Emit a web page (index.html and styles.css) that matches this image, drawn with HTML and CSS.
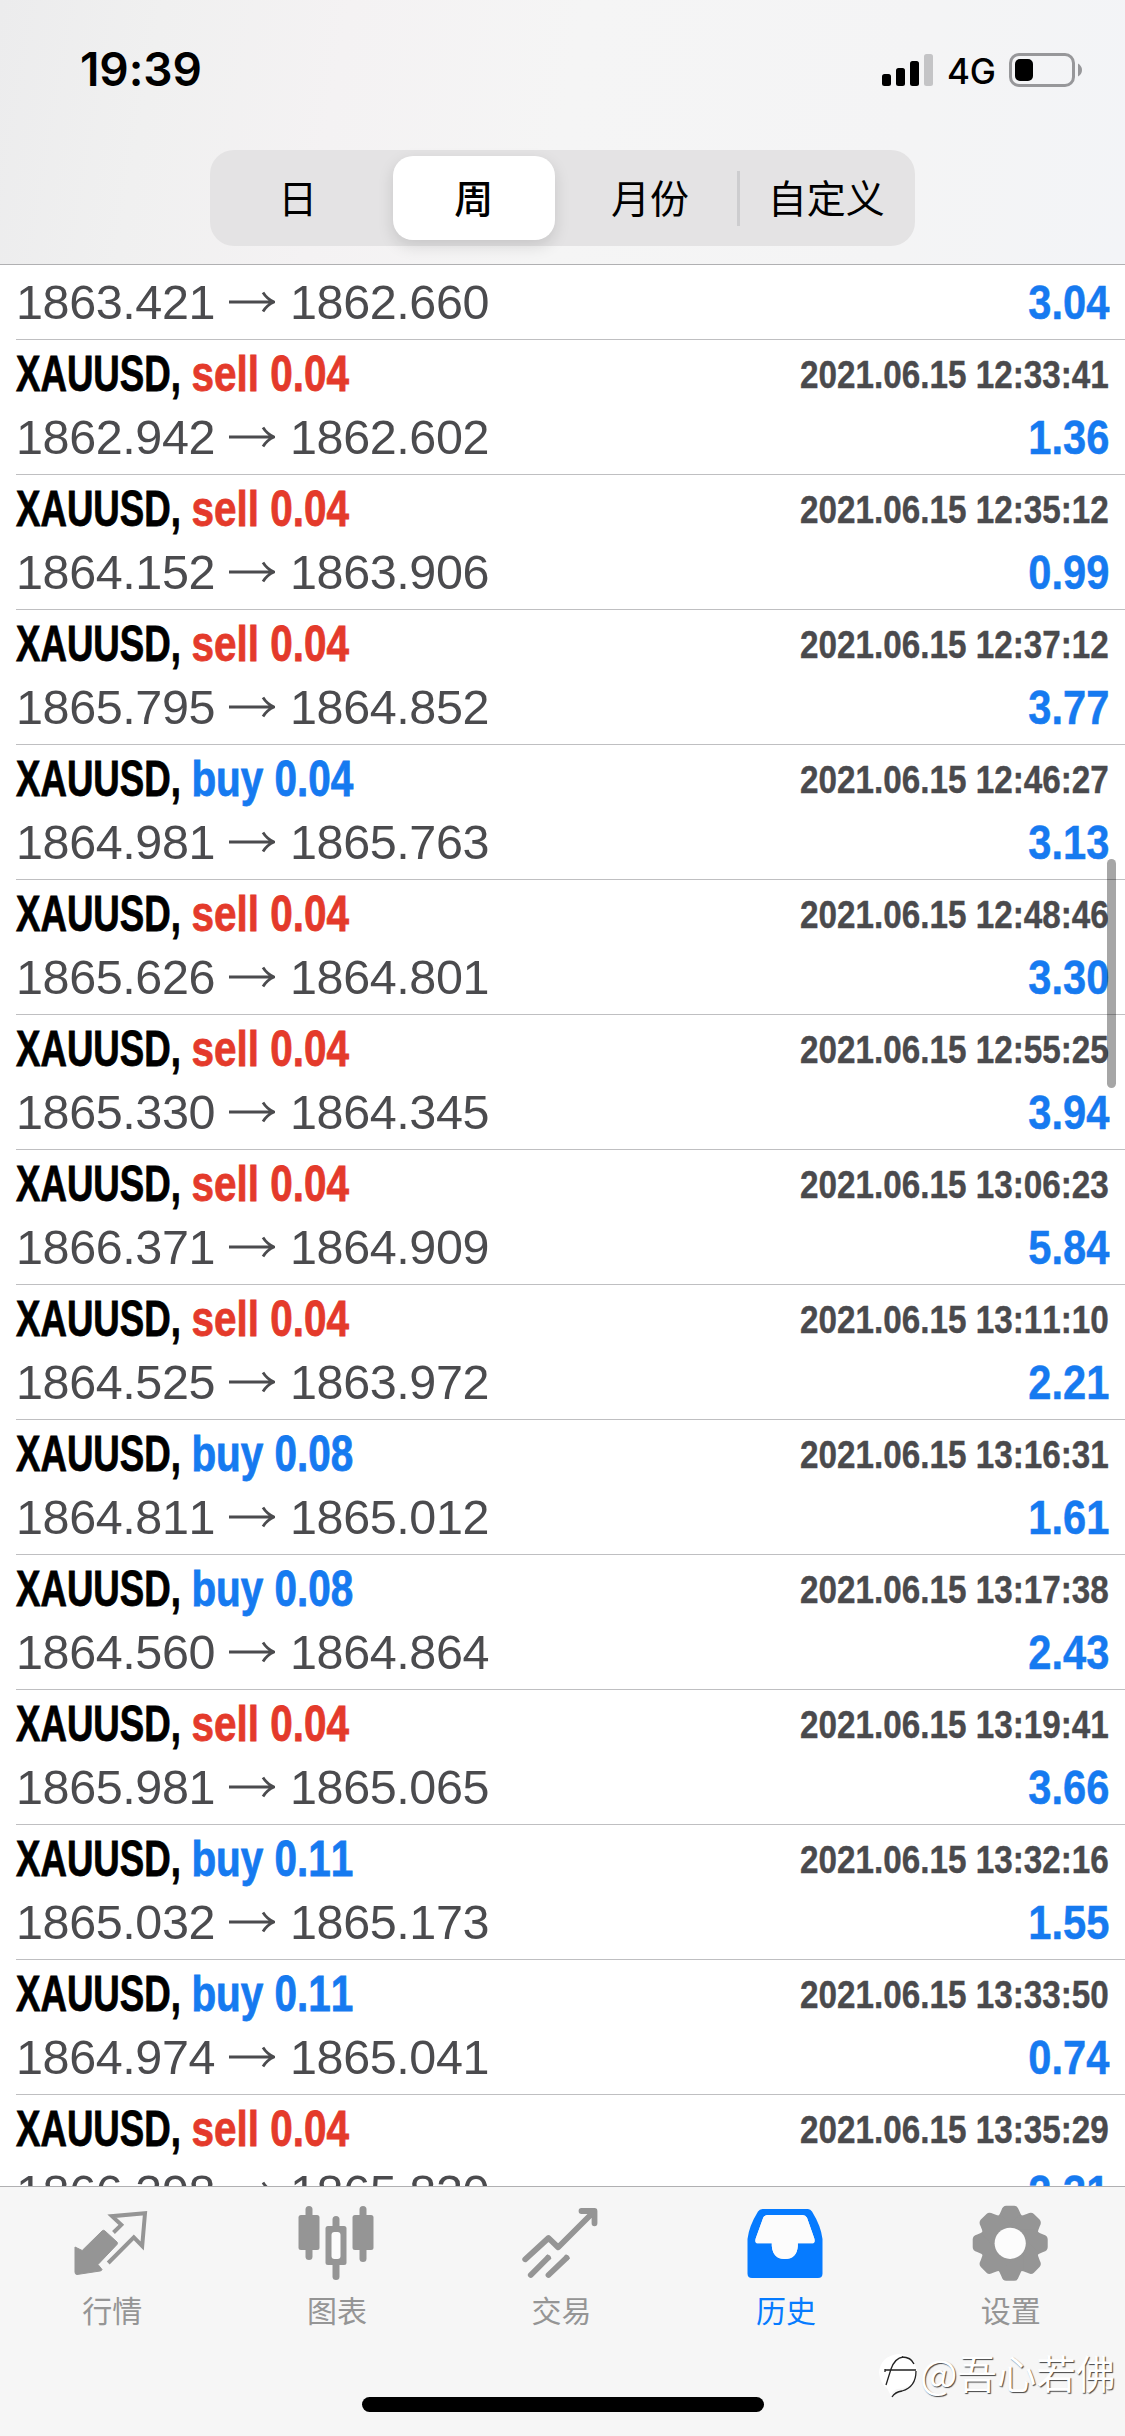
FILE: index.html
```html
<!DOCTYPE html>
<html lang="zh-CN">
<head>
<meta charset="utf-8">
<title>历史</title>
<link rel="stylesheet" href="styles.css">
</head>
<body>
<svg class="defs" width="0" height="0" aria-hidden="true">
  <symbol id="arrow" viewBox="0 0 46 22"><path d="M0 11H43M34 1.5Q38 8 45 11Q38 14 34 20.5" fill="none" stroke="#4b4b4e" stroke-width="2.8"/></symbol>
</svg>
<div class="screen">
  <header class="header">
    <div class="status">
      <span class="time">19:39</span>
      <div class="indicators">
        <svg width="51" height="34" viewBox="0 0 51 34"><rect x="0" y="21" width="9" height="12" rx="2.5"/><rect x="14" y="15" width="9" height="18" rx="2.5"/><rect x="28" y="8" width="9" height="25" rx="2.5"/><rect x="42" y="1" width="9" height="32" rx="2.5" fill="#c4c4c6"/></svg>
        <span class="network">4G</span>
        <svg width="74" height="34" viewBox="0 0 74 34"><rect x="1.5" y="1.5" width="63" height="31" rx="8.5" fill="none" stroke="#97979a" stroke-width="3"/><rect x="6" y="6" width="18" height="22" rx="5"/><path d="M69 10.5Q73 13 73 17Q73 21 69 23.5Z" fill="#97979a"/></svg>
      </div>
    </div>
    <nav class="segments">
      <span class="segment">日</span>
      <span class="segment selected">周</span>
      <span class="segment divided">月份</span>
      <span class="segment">自定义</span>
    </nav>
  </header>

  <main class="list">
    <article class="row first"><div class="line prices"><div class="range"><span>1863.421</span><svg><use href="#arrow"/></svg><span>1862.660</span></div><b class="profit">3.04</b></div></article>
    <article class="row"><div class="line deal"><span class="symbol">XAUUSD, <i class="sell">sell 0.04</i></span><time>2021.06.15 12:33:41</time></div><div class="line prices"><div class="range"><span>1862.942</span><svg><use href="#arrow"/></svg><span>1862.602</span></div><b class="profit">1.36</b></div></article>
    <article class="row"><div class="line deal"><span class="symbol">XAUUSD, <i class="sell">sell 0.04</i></span><time>2021.06.15 12:35:12</time></div><div class="line prices"><div class="range"><span>1864.152</span><svg><use href="#arrow"/></svg><span>1863.906</span></div><b class="profit">0.99</b></div></article>
    <article class="row"><div class="line deal"><span class="symbol">XAUUSD, <i class="sell">sell 0.04</i></span><time>2021.06.15 12:37:12</time></div><div class="line prices"><div class="range"><span>1865.795</span><svg><use href="#arrow"/></svg><span>1864.852</span></div><b class="profit">3.77</b></div></article>
    <article class="row"><div class="line deal"><span class="symbol">XAUUSD, <i class="buy">buy 0.04</i></span><time>2021.06.15 12:46:27</time></div><div class="line prices"><div class="range"><span>1864.981</span><svg><use href="#arrow"/></svg><span>1865.763</span></div><b class="profit">3.13</b></div></article>
    <article class="row"><div class="line deal"><span class="symbol">XAUUSD, <i class="sell">sell 0.04</i></span><time>2021.06.15 12:48:46</time></div><div class="line prices"><div class="range"><span>1865.626</span><svg><use href="#arrow"/></svg><span>1864.801</span></div><b class="profit">3.30</b></div></article>
    <article class="row"><div class="line deal"><span class="symbol">XAUUSD, <i class="sell">sell 0.04</i></span><time>2021.06.15 12:55:25</time></div><div class="line prices"><div class="range"><span>1865.330</span><svg><use href="#arrow"/></svg><span>1864.345</span></div><b class="profit">3.94</b></div></article>
    <article class="row"><div class="line deal"><span class="symbol">XAUUSD, <i class="sell">sell 0.04</i></span><time>2021.06.15 13:06:23</time></div><div class="line prices"><div class="range"><span>1866.371</span><svg><use href="#arrow"/></svg><span>1864.909</span></div><b class="profit">5.84</b></div></article>
    <article class="row"><div class="line deal"><span class="symbol">XAUUSD, <i class="sell">sell 0.04</i></span><time>2021.06.15 13:11:10</time></div><div class="line prices"><div class="range"><span>1864.525</span><svg><use href="#arrow"/></svg><span>1863.972</span></div><b class="profit">2.21</b></div></article>
    <article class="row"><div class="line deal"><span class="symbol">XAUUSD, <i class="buy">buy 0.08</i></span><time>2021.06.15 13:16:31</time></div><div class="line prices"><div class="range"><span>1864.811</span><svg><use href="#arrow"/></svg><span>1865.012</span></div><b class="profit">1.61</b></div></article>
    <article class="row"><div class="line deal"><span class="symbol">XAUUSD, <i class="buy">buy 0.08</i></span><time>2021.06.15 13:17:38</time></div><div class="line prices"><div class="range"><span>1864.560</span><svg><use href="#arrow"/></svg><span>1864.864</span></div><b class="profit">2.43</b></div></article>
    <article class="row"><div class="line deal"><span class="symbol">XAUUSD, <i class="sell">sell 0.04</i></span><time>2021.06.15 13:19:41</time></div><div class="line prices"><div class="range"><span>1865.981</span><svg><use href="#arrow"/></svg><span>1865.065</span></div><b class="profit">3.66</b></div></article>
    <article class="row"><div class="line deal"><span class="symbol">XAUUSD, <i class="buy">buy 0.11</i></span><time>2021.06.15 13:32:16</time></div><div class="line prices"><div class="range"><span>1865.032</span><svg><use href="#arrow"/></svg><span>1865.173</span></div><b class="profit">1.55</b></div></article>
    <article class="row"><div class="line deal"><span class="symbol">XAUUSD, <i class="buy">buy 0.11</i></span><time>2021.06.15 13:33:50</time></div><div class="line prices"><div class="range"><span>1864.974</span><svg><use href="#arrow"/></svg><span>1865.041</span></div><b class="profit">0.74</b></div></article>
    <article class="row"><div class="line deal"><span class="symbol">XAUUSD, <i class="sell">sell 0.04</i></span><time>2021.06.15 13:35:29</time></div><div class="line prices"><div class="range"><span>1866.398</span><svg><use href="#arrow"/></svg><span>1865.820</span></div><b class="profit">2.31</b></div></article>
  </main>
  <div class="scrollbar"></div>

  <footer class="footer">
    <nav class="tabs">
      <div class="tab">
        <svg viewBox="0 0 90 90"><path d="M8 47L15.2 50.5L35 31Q36.500 29.500 38 31L50 42Q51 43.300 50 44.500L31 64.500L35 69.500Q34.500 71 33 71L10 74.500Q8 74.500 8 72Z" fill="currentColor" stroke="currentColor" stroke-linejoin="round"/><path d="M46.500 32.500L54.300 24.800L45 16.200L78 13.300L75.200 46L66.800 37.300L41.200 63" fill="none" stroke="currentColor" stroke-width="4"/></svg>
        <span>行情</span>
      </div>
      <div class="tab">
        <svg viewBox="0 0 90 90" fill="currentColor"><rect x="6.500" y="15" width="21" height="35" rx="2.500"/><rect x="13.500" y="6" width="7" height="54" rx="3.500"/><rect x="60.500" y="15" width="21" height="35" rx="2.500"/><rect x="67.500" y="6" width="7" height="56" rx="3.500"/><rect x="40.500" y="16" width="7" height="64" rx="3.500"/><rect x="33.500" y="26" width="21" height="39" rx="2.500"/><rect x="39.500" y="32" width="9" height="27" rx="3" fill="#fcfcfc"/></svg>
        <span>图表</span>
      </div>
      <div class="tab">
        <svg viewBox="0 0 90 90" fill="none" stroke="currentColor" stroke-width="5.800" stroke-linecap="round" stroke-linejoin="round"><path d="M9.200 59.300L32.500 38L42.200 47.300L78 11.500M65.500 11H78.500V23.300"/><path d="M14.800 75L32 57.800M32.500 75L50.500 57.800"/><path d="M31.500 58.300L33.500 56.300M50 58.300L52 56.300" stroke-linecap="butt"/></svg>
        <span>交易</span>
      </div>
      <div class="tab active">
        <svg viewBox="0 0 90 90" fill="currentColor"><path fill-rule="evenodd" d="M21.500 9H67Q69.500 9 71 11.500Q80 26 81.500 39V73.500Q81.500 78 77 78H11Q6.500 78 6.500 73.500V39Q8 26 17 11.500Q18.500 9 21.500 9ZM27 15Q23.500 15 22.200 17.800L14.700 38.500Q13.500 43.300 17 43.300H30.800V46Q32 59 43.800 59Q55.800 59 56.800 46V43.300H71Q74.500 43.300 73.300 38.500L66 17.800Q64.500 15 61.500 15Z"/><path d="M27 15H61.500Q64.500 15 66 17.800L73.300 38.500Q74.500 43.300 71 43.300H56.800V46Q55.800 59 43.800 59Q32 59 30.800 46V43.300H17Q13.500 43.300 14.700 38.500L22.200 17.800Q23.500 15 27 15Z" fill="#fcfcfc"/></svg>
        <span>历史</span>
      </div>
      <div class="tab">
        <svg viewBox="0 0 90 90" fill="currentColor">
          <defs><path id="tooth" d="M-13.500 -25Q-10 -29 -8.800 -33Q-7.500 -37.500 -4 -37.500H4Q7.500 -37.500 8.800 -33Q10 -29 13.500 -25V0H-13.500Z"/></defs>
          <g transform="translate(44.200 43.300)"><use href="#tooth"/><use href="#tooth" transform="rotate(45)"/><use href="#tooth" transform="rotate(90)"/><use href="#tooth" transform="rotate(135)"/><use href="#tooth" transform="rotate(180)"/><use href="#tooth" transform="rotate(225)"/><use href="#tooth" transform="rotate(270)"/><use href="#tooth" transform="rotate(315)"/><circle r="15.600" fill="#fcfcfc"/></g>
        </svg>
        <span>设置</span>
      </div>
    </nav>
    <div class="home"></div>
  </footer>

  <div class="watermark">
    <svg width="42" height="46" viewBox="0 0 42 46"><path d="M13 42Q14 37 19 35Q38 34 39 17Q36 0 20 0Q3 2 1 18Q2 30 9 34Z" fill="#fff"/><path d="M8 31L13 15Q17 4 25 3M7 16H38M7 15V18" fill="none" stroke="#222" stroke-width="1.300"/><path d="M38 17Q38 33 24 37Q17 38 14 43M24 3Q33 3 36 10" fill="none" stroke="#222" stroke-width="1.300"/></svg>
    <span>@吾心若佛</span>
  </div>
</div>
</body>
</html>
```
FILE: styles.css
```css
* { box-sizing: border-box; }

body {
  margin: 0;
  background: #fff;
  font-family: "Liberation Sans", "Noto Sans CJK SC", sans-serif;
}

.defs { position: absolute; }

.screen {
  position: relative;
  display: flex;
  flex-direction: column;
  width: 1125px;
  height: 2436px;
  overflow: hidden;
}

/* Header */
.header {
  flex: none;
  display: flex;
  flex-direction: column;
  align-items: center;
  height: 265px;
  border-bottom: 1px solid #b0b0b2;
  background: linear-gradient(100deg, #ececed 0, #f0f0f0 14%, #f4f2f3 30%, #f5f5f5 50%, #f4f4f5 80%, #f3f4f7 100%);
}

.status {
  display: flex;
  justify-content: space-between;
  align-items: flex-start;
  width: 100%;
  height: 150px;
  padding: 39px 42px 0 80px;
  font-family: Inter, sans-serif;
}

.time {
  font-size: 46px;
  font-weight: 600;
  line-height: 60px;
  letter-spacing: -0.1px;
}

.indicators {
  display: flex;
  align-items: center;
  padding-top: 13px;
}

.network {
  width: 76px;
  padding: 2px 0 0 14px;
  font-size: 35px;
  font-weight: 500;
  line-height: 34px;
  letter-spacing: -0.2px;
}

.segments {
  display: flex;
  width: 705px;
  height: 96px;
  margin-right: 1px;
  border-radius: 24px;
  background: #e4e3e4;
}

.segment {
  position: relative;
  flex: 1;
  display: flex;
  align-items: center;
  justify-content: center;
  padding-bottom: 4px;
  font: 400 39px/56px "Noto Sans CJK SC", sans-serif;
}

.segment.selected {
  flex: 0 0 162px;
  margin: 6px 7px;
  border-radius: 20px;
  background: #fff;
  font-weight: 500;
  box-shadow: 0 6px 16px rgba(0, 0, 0, .13);
}

.segment.divided::after {
  content: "";
  position: absolute;
  top: 21px;
  right: -2px;
  width: 3px;
  height: 55px;
  background: #cdcdcf;
}

/* Deal history */
.list {
  flex: 1;
  min-height: 0;
  overflow: hidden;
  background: #fff;
  font-kerning: none;
}

.row {
  height: 135px;
  margin-left: 16px;
  padding: 4px 16px 0 0;
  border-bottom: 1px solid #bfbfc1;
}

.row.first {
  height: 75px;
  padding-top: 7px;
}

.line {
  display: flex;
  justify-content: space-between;
  align-items: flex-start;
  height: 60px;
  white-space: nowrap;
}

.prices { margin-top: 3px; }
.row.first .prices { margin-top: 0; }

.symbol {
  font-size: 49.5px;
  font-weight: 700;
  line-height: 60px;
  transform: scaleX(.74);
  transform-origin: left;
  -webkit-text-stroke: .8px currentColor;
}

.symbol i {
  display: inline-block;
  font-style: normal;
  transform: scaleX(1.105);
  transform-origin: left;
}

.sell { color: #e43a2b; }
.buy { color: #167af0; }

time {
  padding-top: 3px;
  color: #4a4a4d;
  font-size: 39.5px;
  font-weight: 700;
  line-height: 54px;
  transform: scaleX(.842);
  transform-origin: right;
  -webkit-text-stroke: .4px currentColor;
}

.range {
  display: flex;
  align-items: center;
  color: #4b4b4e;
  font-size: 48.5px;
  line-height: 60px;
  letter-spacing: -0.4px;
}

.range span { width: 196px; }
.range span + svg { margin: 0 15px 0 17px; }
.range svg { width: 46px; height: 22px; }

.profit {
  color: #167af0;
  font-size: 49px;
  line-height: 60px;
  transform: scaleX(.85);
  transform-origin: right;
  -webkit-text-stroke: .5px currentColor;
}

.scrollbar {
  position: absolute;
  top: 859px;
  left: 1107px;
  width: 9px;
  height: 229px;
  border-radius: 5px;
  background: rgba(0, 0, 0, .35);
}

/* Tab bar */
.footer {
  flex: none;
  display: flex;
  flex-direction: column;
  align-items: center;
  justify-content: space-between;
  height: 250px;
  padding-bottom: 24px;
  border-top: 1px solid #b0b0b2;
  background: #f6f6f6;
}

.tabs {
  display: flex;
  width: 100%;
  padding-right: 2px;
}

.tab {
  flex: 1;
  display: flex;
  flex-direction: column;
  align-items: center;
  padding-top: 13px;
  color: #959595;
  font: 400 30px/38px "Noto Sans CJK SC", sans-serif;
}

.tab svg { width: 90px; height: 90px; }
.tab.active { color: #067bff; }

.home {
  width: 402px;
  height: 15px;
  border-radius: 8px;
  background: #000;
}

.watermark {
  position: absolute;
  top: 2354px;
  left: 878px;
  display: flex;
  align-items: flex-start;
  color: #fff;
  font: 400 39.5px/36px "Noto Sans CJK SC", sans-serif;
  text-shadow: 1px 1px 1px #444;
}
```
